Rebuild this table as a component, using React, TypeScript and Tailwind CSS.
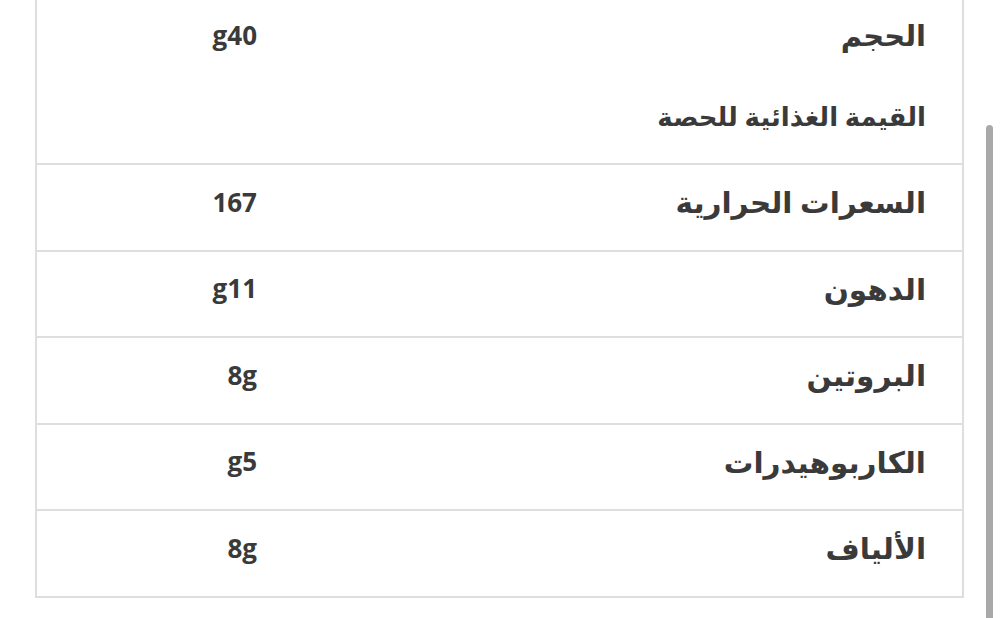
import React from "react";

const rows = [
  { label: "السعرات الحرارية", value: "167" },
  { label: "الدهون", value: "g11" },
  { label: "البروتين", value: "8g" },
  { label: "الكاربوهيدرات", value: "g5" },
  { label: "الألياف", value: "8g" },
];

export default function App() {
  return (
    <div
      dir="rtl"
      className="relative w-[1000px] h-[618px] overflow-hidden bg-white text-[#3a3a3a]"
      style={{ fontFamily: '"Open Sans", "DejaVu Sans", sans-serif' }}
    >
      <div className="absolute right-[7px] top-[125px] w-[7px] h-[500px] rounded-t-full bg-[#a9a9a9]" />
      <div className="mr-[36px] w-[929px] border-x-2 border-b-2 border-[#dedede]">
        <div className="h-[70px] flex items-center">
          <div className="w-[670px] pr-[36px] text-[29px] font-bold">الحجم</div>
          <div className="flex-1 pr-[35px] text-[26px] font-bold">g40</div>
        </div>
        <div className="h-[93px] pt-[27px] pr-[36px] text-[26px] font-semibold">
          القيمة الغذائية للحصة
        </div>
        {rows.map((r) => (
          <div key={r.label} className="h-[86.5px] pb-[10px] flex items-center border-t-2 border-[#dedede]">
            <div className="w-[670px] pr-[36px] text-[29.5px] font-bold">{r.label}</div>
            <div className="flex-1 pr-[35px] text-[26px] font-bold">{r.value}</div>
          </div>
        ))}
      </div>
    </div>
  );
}
